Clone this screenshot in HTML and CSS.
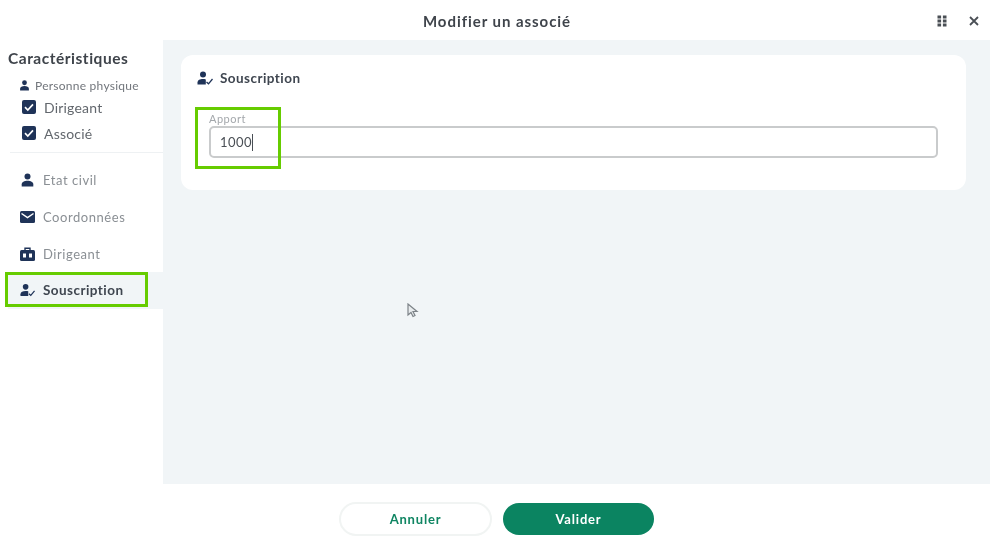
FILE: index.html
```html
<!DOCTYPE html>
<html lang="fr">
<head>
    <meta charset="UTF-8">
    <meta name="viewport" content="width=device-width, initial-scale=1.0">
    <title>Modifier un associé</title>
    <link rel="stylesheet" href="styles.css">
</head>
<body>
    <div class="dialog">
        <header class="dialog-header">
            <h1 class="dialog-title">Modifier un associé</h1>
            <div class="dialog-tools">
                <svg class="tool-icon" viewBox="0 0 10 12" width="10" height="12"><g fill="#4a4f55"><rect x="0.5" y="0.5" width="3.6" height="3"/><rect x="5.9" y="0.5" width="3.6" height="3"/><rect x="0.5" y="4.5" width="3.6" height="3"/><rect x="5.9" y="4.5" width="3.6" height="3"/><rect x="0.5" y="8.5" width="3.6" height="3"/><rect x="5.9" y="8.5" width="3.6" height="3"/></g></svg>
                <svg class="tool-icon" viewBox="0 0 10 10" width="10" height="10"><path d="M1 1l8 8M9 1l-8 8" stroke="#4a4f55" stroke-width="1.8" fill="none"/></svg>
            </div>
        </header>

        <div class="dialog-body">
            <aside class="sidebar">
                <h2 class="sidebar-title">Caractéristiques</h2>
                <div class="person-type">
                    <svg viewBox="0 0 12 12" width="11" height="11"><circle cx="6" cy="3" r="2.6" fill="#1f3358"/><path d="M1.2 11.5V9.6C1.2 7.6 3.4 6.6 6 6.6s4.8 1 4.8 3v1.9z" fill="#1f3358"/></svg>
                    <span>Personne physique</span>
                </div>
                <div class="check-row">
                    <svg viewBox="0 0 14 14" width="14" height="14"><rect width="14" height="14" rx="2" fill="#1f3358"/><path d="M3 7.2l2.8 2.8L11 4.4" stroke="#fff" stroke-width="1.7" fill="none"/></svg>
                    <span>Dirigeant</span>
                </div>
                <div class="check-row">
                    <svg viewBox="0 0 14 14" width="14" height="14"><rect width="14" height="14" rx="2" fill="#1f3358"/><path d="M3 7.2l2.8 2.8L11 4.4" stroke="#fff" stroke-width="1.7" fill="none"/></svg>
                    <span>Associé</span>
                </div>
                <hr class="sidebar-sep">
                <nav class="side-nav">
                    <a class="nav-item">
                        <svg viewBox="0 0 14 14" width="14" height="14"><circle cx="7" cy="3.6" r="3" fill="#1f3358"/><path d="M1.2 13.5v-2.2C1.2 9 3.8 7.8 7 7.8s5.8 1.2 5.8 3.5v2.2z" fill="#1f3358"/></svg>
                        <span>Etat civil</span>
                    </a>
                    <a class="nav-item">
                        <svg viewBox="0 0 15 12" width="15" height="12"><rect width="15" height="12" rx="1.5" fill="#1f3358"/><path d="M1.5 2.5L7.5 6.5l6-4" stroke="#fff" stroke-width="1.5" fill="none"/></svg>
                        <span>Coordonnées</span>
                    </a>
                    <a class="nav-item">
                        <svg viewBox="0 0 15 14" width="15" height="14"><path d="M5 3V1.2h5V3" stroke="#1f3358" stroke-width="1.4" fill="none"/><rect y="3" width="15" height="11" rx="1.5" fill="#1f3358"/><rect x="3" y="6.5" width="3" height="4" fill="#fff"/><rect x="9" y="6.5" width="3" height="4" fill="#fff"/></svg>
                        <span>Dirigeant</span>
                    </a>
                    <a class="nav-item nav-item-active">
                        <svg viewBox="0 0 16 14" width="16" height="14"><circle cx="6" cy="3.6" r="3" fill="#1f3358"/><path d="M0.5 13.5v-2C.5 9 3 8 6 8c1 0 2 .1 2.8.4v5.1z" fill="#1f3358"/><path d="M9.5 11l2 1.8L15.5 8" stroke="#1f3358" stroke-width="1.3" fill="none"/></svg>
                        <span>Souscription</span>
                    </a>
                </nav>
            </aside>

            <main class="content">
                <section class="card">
                    <div class="card-title">
                        <svg viewBox="0 0 16 14" width="16" height="14"><circle cx="6" cy="3.6" r="3" fill="#1f3358"/><path d="M0.5 13.5v-2C.5 9 3 8 6 8c1 0 2 .1 2.8.4v5.1z" fill="#1f3358"/><path d="M9.5 11l2 1.8L15.5 8" stroke="#1f3358" stroke-width="1.3" fill="none"/></svg>
                        <span>Souscription</span>
                    </div>
                    <label class="field">
                        <span class="field-label">Apport</span>
                        <span class="field-input">1000<i class="caret"></i></span>
                    </label>
                </section>
            </main>
        </div>

        <footer class="dialog-footer">
            <button class="btn btn-cancel">Annuler</button>
            <button class="btn btn-ok">Valider</button>
        </footer>
    </div>

    <!-- annotations drawn over the capture -->
    <div class="mark mark-nav"></div>
    <div class="mark mark-field"></div>
    <svg class="pointer" viewBox="0 0 12 16" width="12" height="16"><path d="M1 1v11l3-2.5 2 4 2-1-2-4h4z" fill="#e8ecee" stroke="#7d8388" stroke-width="1.2"/></svg>
</body>
</html>
```

FILE: styles.css
```css
html, body {
    margin: 0;
    height: 100%;
    overflow: hidden;
}
body {
    font-family: Lato, "Noto Sans", sans-serif;
    background: #fff;
    color: #1f3358;
}
.dialog {
    width: 990px;
    height: 550px;
    display: flex;
    flex-direction: column;
    filter: blur(0.6px);
}
.dialog-header {
    height: 40px;
    flex: none;
    display: flex;
    align-items: center;
    justify-content: center;
    padding-top: 2px;
    box-sizing: border-box;
    position: relative;
}
.dialog-title {
    margin: 0 0 0 4px;
    font-size: 15px;
    font-weight: 700;
    letter-spacing: 0.95px;
    color: #3f444b;
}
.dialog-tools {
    position: absolute;
    right: 11px;
    top: 15px;
    display: flex;
    align-items: center;
    gap: 22px;
}
.tool-icon {
    display: block;
}
.dialog-body {
    height: 444px;
    flex: none;
    display: flex;
}
.sidebar {
    width: 163px;
    flex: none;
    box-sizing: border-box;
    padding-top: 10px;
}
.sidebar-title {
    margin: 0 0 0 8px;
    font-size: 15.5px;
    line-height: 17px;
    font-weight: 700;
    letter-spacing: 0.52px;
    color: #3f444b;
}
.person-type {
    display: flex;
    align-items: center;
    gap: 5px;
    margin: 12px 0 2px 19px;
    font-size: 12px;
    line-height: 13px;
    letter-spacing: 0.25px;
    color: #72767c;
}
.check-row {
    display: flex;
    align-items: center;
    gap: 8px;
    height: 26px;
    margin-left: 22px;
    font-size: 14px;
    letter-spacing: 0.2px;
    color: #62676d;
}
.sidebar-sep {
    margin: 6px 0 9px 10px;
    border: 0;
    border-top: 1px solid #eef1f3;
}
.side-nav {
    display: flex;
    flex-direction: column;
}
.nav-item {
    height: 36.7px;
    display: flex;
    align-items: center;
    gap: 8px;
    padding-left: 20px;
    font-size: 13px;
    letter-spacing: 0.55px;
    color: #8a8f94;
}
.nav-item svg {
    width: 15px;
    flex: none;
}
.nav-item-active {
    margin-left: 8px;
    padding-left: 12px;
    background: #f1f5f7;
    font-size: 13.5px;
    letter-spacing: 0.45px;
    font-weight: 700;
    color: #3f4650;
}
.content {
    flex: 1;
    background: #f1f5f7;
    padding: 15px 24px 0 18px;
}
.card {
    height: 135px;
    box-sizing: border-box;
    background: #fff;
    border-radius: 12px;
    padding: 15px 28px 0 16px;
}
.card-title {
    display: flex;
    align-items: center;
    gap: 7px;
    font-size: 13.5px;
    font-weight: 700;
    letter-spacing: 0.45px;
    color: #3f4650;
}
.field {
    display: block;
    margin: 27px 0 0 12px;
}
.field-label {
    display: block;
    font-size: 11px;
    line-height: 12px;
    letter-spacing: 0.5px;
    color: #a3a7ab;
    margin-bottom: 1px;
}
.field-input {
    display: flex;
    align-items: center;
    height: 32px;
    box-sizing: border-box;
    border: 2px solid #c9cbcc;
    border-radius: 5px;
    padding-left: 9px;
    font-size: 13px;
    letter-spacing: 0.5px;
    color: #4a4f55;
}
.caret {
    width: 1px;
    height: 17px;
    background: #4a4f55;
}
.dialog-footer {
    flex: 1;
    display: flex;
    justify-content: center;
    align-items: center;
    gap: 11px;
    padding: 3px 0 0 3px;
    height: 66px;
    box-sizing: border-box;
}
.btn {
    height: 34px;
    border-radius: 17px;
    font-family: inherit;
    font-size: 13px;
    font-weight: 700;
    letter-spacing: 0.8px;
    cursor: pointer;
}
.btn-cancel {
    width: 153px;
    background: #fff;
    border: 2px solid #f1f4f3;
    color: #0f8562;
}
.btn-ok {
    width: 151px;
    height: 32px;
    background: #0b8461;
    border: none;
    color: #fff;
}
.mark {
    position: absolute;
    box-sizing: border-box;
    border: 3px solid #66cc00;
}
.mark-nav {
    left: 5px;
    top: 272px;
    width: 143px;
    height: 35px;
}
.mark-field {
    left: 195px;
    top: 107px;
    width: 86px;
    height: 62px;
}
.pointer {
    position: absolute;
    left: 407px;
    top: 303px;
}
```
